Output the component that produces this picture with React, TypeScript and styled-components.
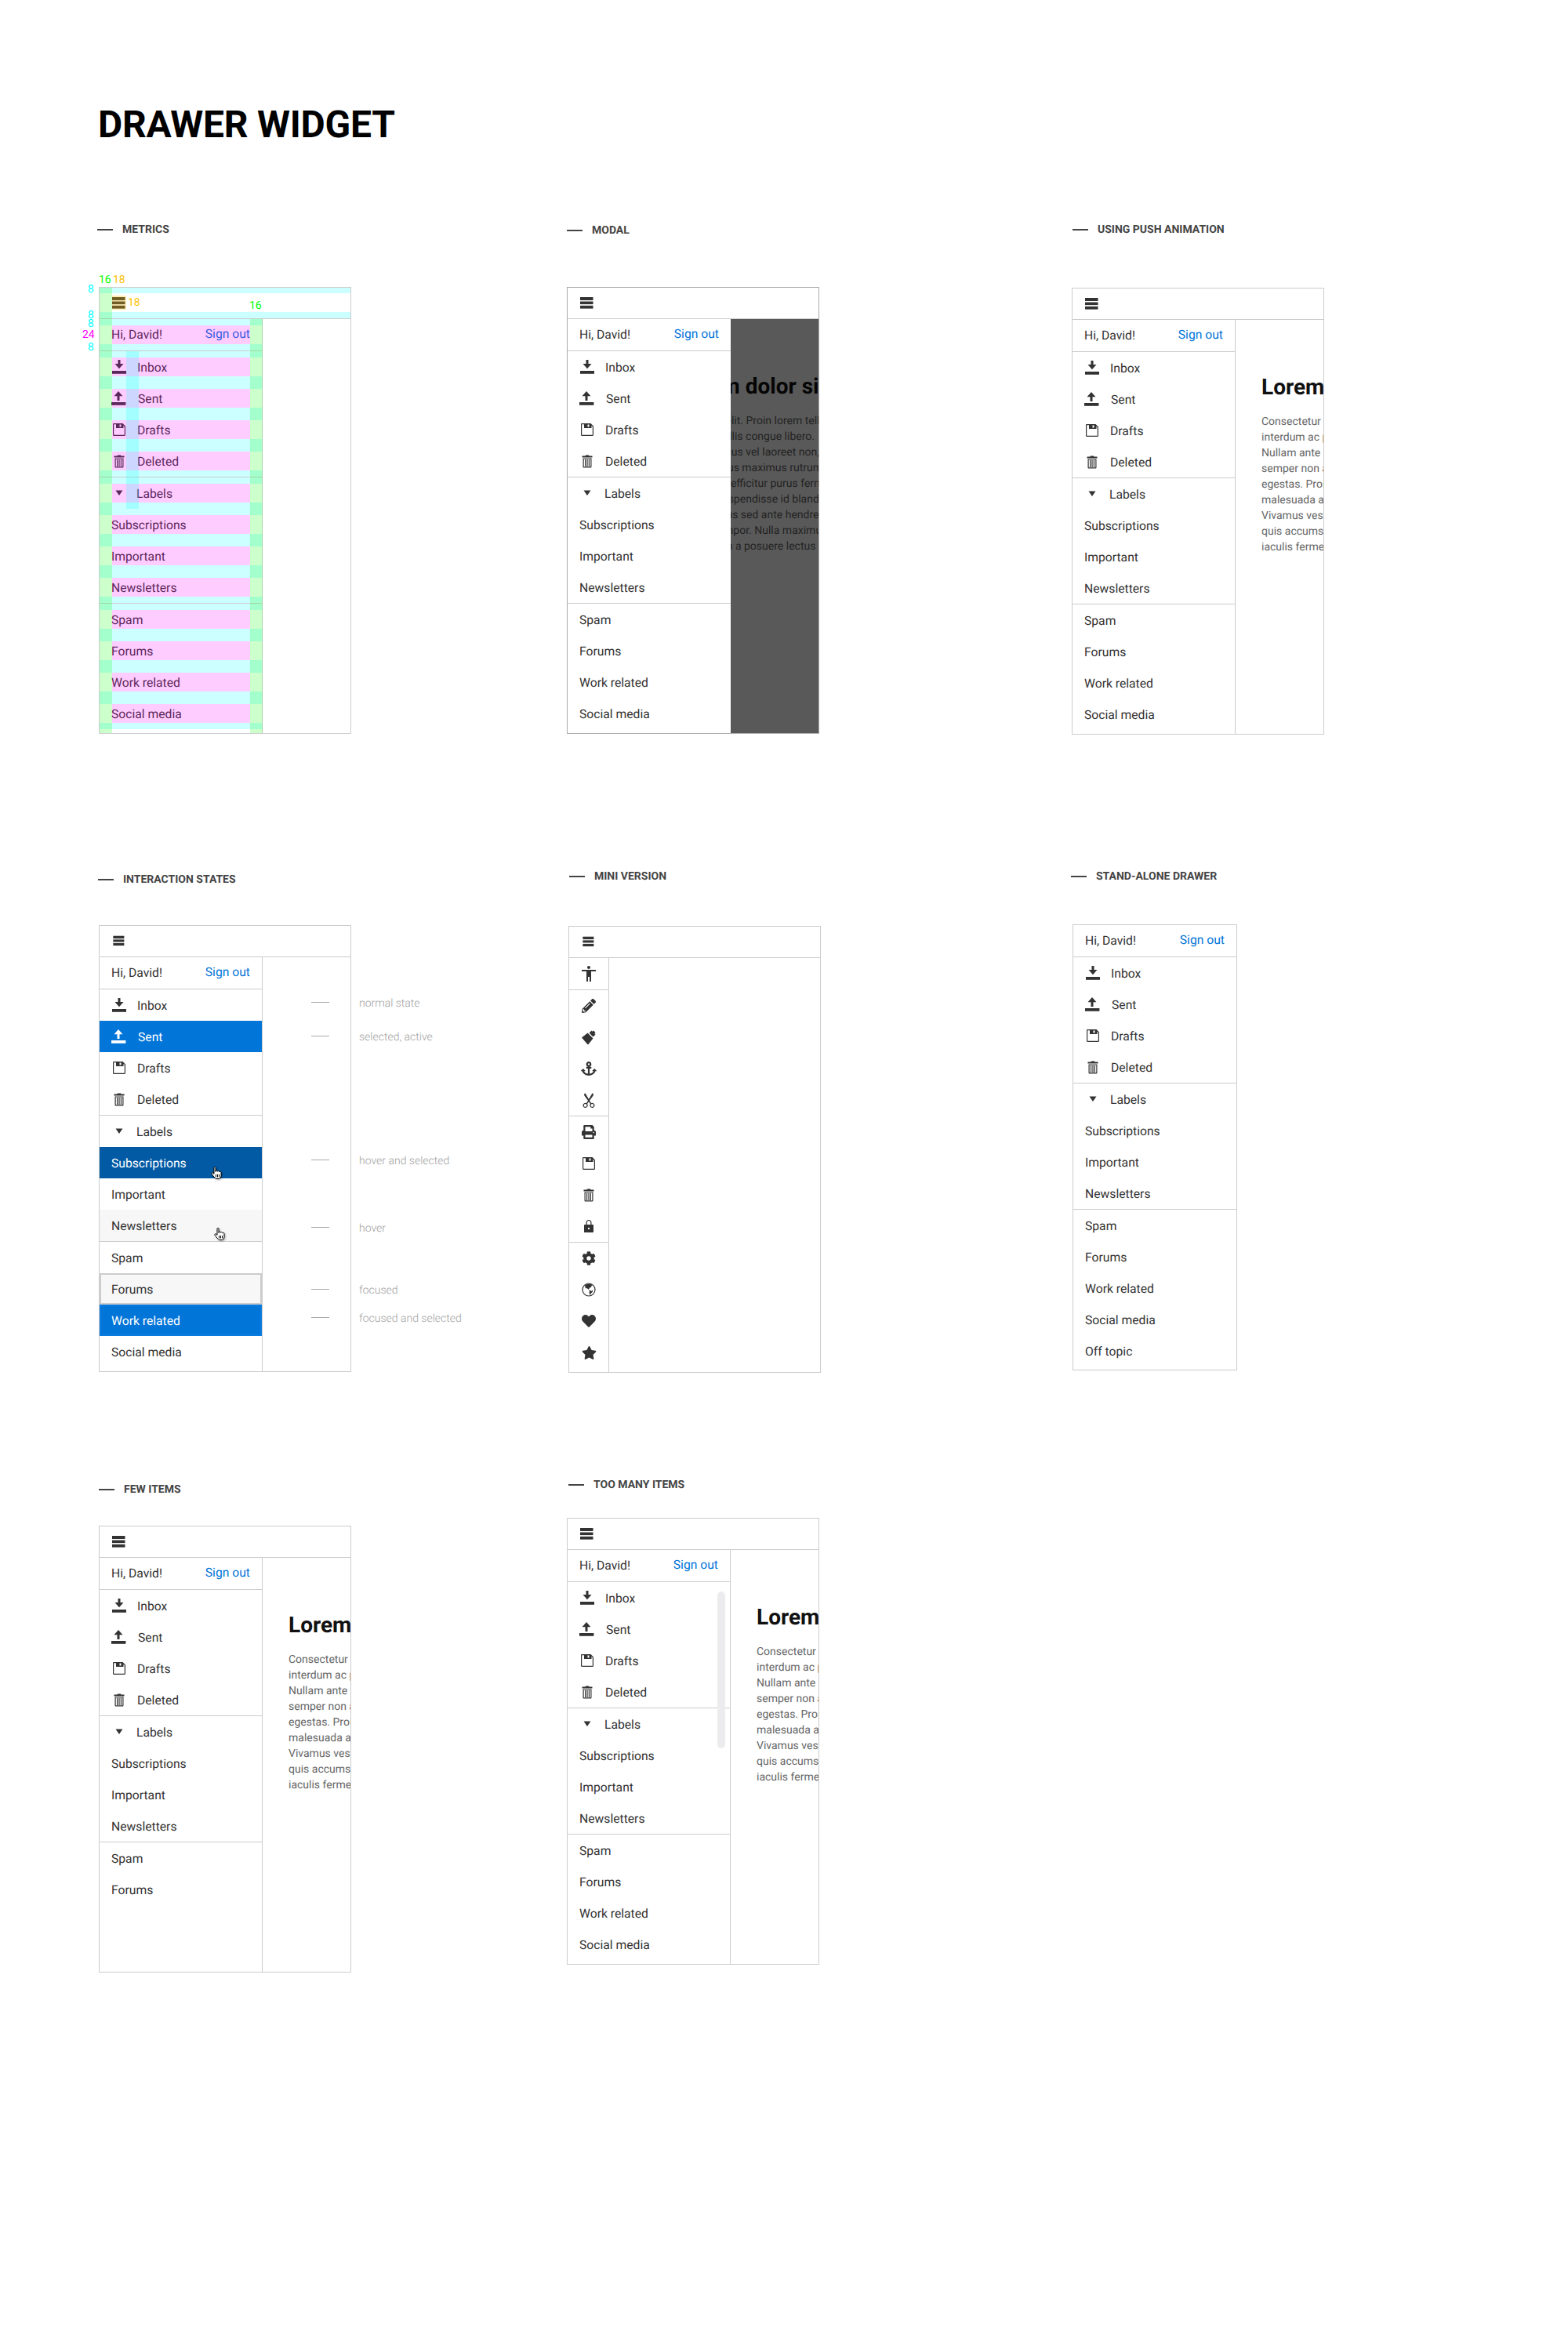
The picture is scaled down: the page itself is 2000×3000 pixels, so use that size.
import React from "react";
import styled, { createGlobalStyle } from "styled-components";
import { FaAnchor, FaCog, FaHeart, FaPencilAlt, FaPrint, FaStar } from "react-icons/fa";
import { MdAccessibility } from "react-icons/md";
import { BsScissors } from "react-icons/bs";

const Global = createGlobalStyle`
  html, body { margin: 0; padding: 0; background: #fff; }
  body {
    font-family: Roboto, "Liberation Sans", sans-serif;
    color: #333;
    text-rendering: geometricPrecision;
  }
  * { box-sizing: border-box; }
`;

const Page = styled.div`
  width: 2000px;
  height: 3000px;
  overflow: hidden;
`;
const Header = styled.header`
  height: 286px;
  padding: 131px 0 0 125px;
`;
const Title = styled.h1`
  margin: 0;
  font-size: 48px;
  line-height: 56px;
  font-weight: 700;
  letter-spacing: -0.25px;
  color: #000;
`;
const Row = styled.section<{ $h: number }>`
  display: grid;
  grid-template-columns: 723px 645px 1fr;
  height: ${(p) => p.$h}px;
  align-items: start;
`;
const Specimen = styled.div``;
const Label = styled.div<{ $x: number; $y: number }>`
  display: flex;
  align-items: center;
  gap: 12px;
  height: 14px;
  margin: ${(p) => p.$y}px 0 0 ${(p) => p.$x}px;
  font-size: 14px;
  line-height: 14px;
  font-weight: 700;
  color: #444;
  white-space: nowrap;
  &::before {
    content: "";
    width: 20px;
    height: 2px;
    background: #444;
  }
`;
const Frame = styled.div<{ $x: number; $y: number; $w?: number; $h?: number; $dark?: boolean }>`
  position: relative;
  display: flex;
  flex-direction: column;
  width: ${(p) => p.$w ?? 322}px;
  height: ${(p) => p.$h ?? 570}px;
  margin: ${(p) => p.$y}px 0 0 ${(p) => p.$x}px;
  border: 1px solid ${(p) => (p.$dark ? "#aaa" : "#ccc")};
  background: #fff;
`;
const Toolbar = styled.div`
  display: flex;
  align-items: center;
  flex: 0 0 40px;
  padding: 0 0 1px 16px;
  border-bottom: 1px solid #ccc;
`;
const Body = styled.div`
  position: relative;
  display: flex;
  flex: 1;
  min-height: 0;
  overflow: hidden;
`;
const DrawerBox = styled.nav<{ $w?: number; $noEdge?: boolean; $over?: boolean }>`
  flex: 0 0 ${(p) => p.$w ?? 208}px;
  width: ${(p) => p.$w ?? 208}px;
  height: 100%;
  background: #fff;
  border-right: ${(p) => (p.$noEdge ? "0" : "1px solid #ccc")};
  ${(p) => (p.$over ? "position: absolute; left: 0; top: 0; z-index: 2;" : "")}
`;
const DrawerHead = styled.div`
  display: flex;
  justify-content: space-between;
  height: 41px;
  padding: 8px 15px;
  border-bottom: 1px solid #ccc;
  font-size: 15.7px;
  line-height: 24px;
`;
const SignOut = styled.span`
  color: #0275d8;
  margin-top: -1px;
`;
const Group = styled.div<{ $last?: boolean }>`
  border-bottom: ${(p) => (p.$last ? "0" : "1px solid #ccc")};
`;
const variants: Record<string, string> = {
  normal: "",
  selected: "background:#0275d8;color:#fff;",
  hoverSelected: "background:#025aa5;color:#fff;",
  hover: "background:#f7f7f7;",
  focused: "background:#f7f7f7;box-shadow:inset 0 0 0 2px #ccc;",
  focusedSelected: "background:#0275d8;color:#fff;box-shadow:inset 0 0 0 2px #0b7be0;",
};
const Item = styled.div<{ $state?: string }>`
  display: flex;
  align-items: center;
  gap: 14px;
  height: 40px;
  padding: 0 15px;
  font-size: 15.7px;
  line-height: 24px;
  color: #333;
  ${(p) => variants[p.$state ?? "normal"]}
  & > svg {
    margin-left: 1px;
  }
`;
const ItemText = styled.span<{ $shift?: number }>`
  padding-top: 2px;
  margin-left: ${(p) => p.$shift ?? 0}px;
`;
const IconSvg = styled.svg<{ $scale?: number }>`
  flex: 0 0 18px;
  width: ${(p) => 18 * (p.$scale ?? 1)}px;
  height: ${(p) => 18 * (p.$scale ?? 1)}px;
  overflow: visible;
  fill: currentColor;
`;
const MiniDrawer = styled.nav`
  flex: 0 0 51px;
  height: 100%;
  border-right: 1px solid #ccc;
`;
const MiniHead = styled.div`
  display: flex;
  align-items: center;
  justify-content: center;
  height: 41px;
  border-bottom: 1px solid #ccc;
  color: #333;
`;
const MiniGroup = styled.div<{ $last?: boolean }>`
  border-bottom: ${(p) => (p.$last ? "0" : "1px solid #ccc")};
`;
const MiniItem = styled.div`
  display: flex;
  align-items: center;
  justify-content: center;
  height: 40px;
  color: #333;
`;
const Content = styled.article<{ $left: number }>`
  flex: 1;
  min-width: 0;
  padding: 69px 0 0 ${(p) => p.$left}px;
  overflow: hidden;
  white-space: nowrap;
`;
const Heading = styled.h2`
  margin: 0 0 17px;
  font-size: 28px;
  line-height: 34px;
  font-weight: 700;
  color: #111;
`;
const Para = styled.p`
  margin: 0;
  font-size: 14px;
  line-height: 20px;
  color: #666;
`;
const Scrim = styled.div`
  position: absolute;
  inset: 0;
  z-index: 1;
  background: rgba(0, 0, 0, 0.65);
`;
const Scrollbar = styled.div`
  position: absolute;
  left: 191px;
  top: 53px;
  width: 10px;
  height: 200px;
  border-radius: 5px;
  background: #ececee;
`;
const Annotation = styled.div<{ $y: number }>`
  position: absolute;
  left: 270px;
  top: ${(p) => p.$y}px;
  display: flex;
  align-items: center;
  gap: 38px;
  height: 20px;
  font-size: 14px;
  font-weight: 300;
  line-height: 20px;
  color: #a0a0a0;
  white-space: nowrap;
  &::before {
    content: "";
    width: 23px;
    height: 1px;
    margin-top: -3px;
    background: #aaa;
  }
`;
const Cursor = styled.svg<{ $x: number; $y: number }>`
  position: absolute;
  left: ${(p) => p.$x}px;
  top: ${(p) => p.$y}px;
  width: 15px;
  height: 17px;
  overflow: visible;
`;

/* Metrics overlay */
const Overlay = styled.div`
  position: absolute;
  inset: 0;
  z-index: 3;
  pointer-events: none;
  display: flex;
  flex-direction: column;
`;
const Band = styled.div<{ $full?: boolean; $h?: number; $top?: number; $blank?: boolean }>`
  flex: 0 0 ${(p) => p.$h ?? 40}px;
  width: ${(p) => (p.$full ? "320px" : "207px")};
  padding: ${(p) => p.$top ?? 8}px ${(p) => (p.$blank ? 0 : 15)}px 8px ${(p) => (p.$blank ? 0 : 16)}px;
  background: linear-gradient(
    to bottom,
    rgba(0, 255, 255, 0.2) ${(p) => p.$top ?? 8}px,
    transparent ${(p) => p.$top ?? 8}px,
    transparent calc(100% - 8px),
    rgba(0, 255, 255, 0.2) calc(100% - 8px)
  );
  display: flex;
`;
const BandCore = styled.div<{ $blank?: boolean }>`
  flex: 1;
  background: ${(p) => (p.$blank ? "transparent" : "rgba(255, 0, 255, 0.2)")};
`;
const BandGap = styled.div`
  flex: 0 0 1px;
`;
const Strip = styled.div<{ $x: number; $w: number; $top: number; $h?: number; $c: string }>`
  position: absolute;
  left: ${(p) => p.$x}px;
  width: ${(p) => p.$w}px;
  top: ${(p) => p.$top}px;
  ${(p) => (p.$h ? `height:${p.$h}px;` : "bottom:0;")}
  background: ${(p) => p.$c};
`;
const Note = styled.span<{ $x: number; $y: number; $c: string }>`
  position: absolute;
  left: ${(p) => p.$x}px;
  top: ${(p) => p.$y}px;
  font-size: 14px;
  line-height: 16px;
  color: ${(p) => p.$c};
`;

/* Icons */
const Svg = ({ children, scale }: { children: React.ReactNode; scale?: number }) => (
  <IconSvg viewBox="0 0 18 18" $scale={scale}>
    {children}
  </IconSvg>
);
const MenuIcon = ({ small }: { small?: boolean }) => (
  <Svg scale={small ? 0.85 : 1}>
    <rect x="0" y="2" width="16.5" height="4" />
    <rect x="0" y="7.5" width="16.5" height="3.6" />
    <rect x="0" y="12.8" width="16.5" height="3.8" />
  </Svg>
);
const DownloadIcon = () => (
  <Svg>
    <path d="M7.5 0h3v5h4L9 11.2 3.500 5h4z" />
    <rect x="0" y="14" width="18" height="3.8" />
  </Svg>
);
const UploadIcon = () => (
  <Svg>
    <path d="M8 0l5.500 6.200h-4V12h-3V6.200h-4z" />
    <rect x="-1" y="14" width="18.4" height="3.8" />
  </Svg>
);
const SaveIcon = () => (
  <Svg>
    <path
      fillRule="evenodd"
      d="M2.200 1h11.300L17 4.500v11.300c0 .7-.5 1.200-1.200 1.200H2.200C1.500 17 1 16.500 1 15.800V2.200C1 1.500 1.500 1 2.200 1zM2.200 2.200v13.600h13.600V5l-1.300-1.300V7H5V2.200zM9.500 2.500v3h2v-3z"
    />
  </Svg>
);
const TrashIcon = () => (
  <Svg>
    <path
      fillRule="evenodd"
      d="M6.500 2.500L7 1.500h4l.5 1h4v2h-13v-2zM3.500 5.500h11v10.700c0 .7-.5 1.300-1.200 1.300H4.700c-.7 0-1.200-.6-1.200-1.300zM4.700 6.500v9.500c0 .2.100.3.300.3h8c.2 0 .3-.1.300-.3V6.500z"
    />
    <rect x="6" y="7" width="1.200" height="9" />
    <rect x="8.400" y="7" width="1.200" height="9" />
    <rect x="10.800" y="7" width="1.200" height="9" />
  </Svg>
);
const CaretIcon = () => (
  <Svg>
    <path d="M4.500 5.500h9L9 12z" />
  </Svg>
);
const BrushIcon = () => (
  <Svg>
    <path d="M0 9.500L7.500 3.500l7 7L8.500 18c-.5.3-1 .2-1.400-.2zM9.500 3.500l3-3 1.200 1.200 1.300-1.300 2.600 2.600-1.300 1.300 1.200 1.200-3 3z" />
  </Svg>
);
const GlobeIcon = () => (
  <Svg>
    <circle cx="9" cy="9" r="8" fill="none" stroke="currentColor" strokeWidth="1.200" />
    <path d="M4 3.500C6.500 1 11 .8 14 3l-1.500 1-.5 2-2 .5-1 2.500L6.500 7 5 7.500zM9 9.500l3.500 1.200 1.500-1v1.800L11.500 14l-.5 2.500-1.500-3.500.5-1.500z" />
  </Svg>
);
const LockIcon = () => (
  <Svg>
    <path
      fillRule="evenodd"
      d="M5.500 7V4.500C5.500 2.300 7 1 9 1s3.500 1.300 3.500 3.500V7H14c.6 0 1 .4 1 1v8c0 .6-.4 1-1 1H4c-.6 0-1-.4-1-1V8c0-.6.4-1 1-1zM6.700 7h4.600V4.500C11.300 3 10.300 2.100 9 2.100S6.700 3 6.700 4.500zM8 11v2h2v-2z"
    />
  </Svg>
);
const HandCursor = ({ x, y }: { x: number; y: number }) => (
  <Cursor $x={x} $y={y} viewBox="0 0 15 17">
    <path
      d="M4 1.200c0-1.200 2-1.200 2 0v5.300l.5-1.200c1-.6 1.800 0 1.800.8l.7-.4c1-.4 1.700.2 1.700 1l.7-.3c.9-.2 1.600.4 1.600 1.300v3.800c0 1.700-1 3.500-2.500 4H6.500C5 14.500 3 12 1 9.300c-.7-1.100.6-2 1.500-1.200L4 9.300z"
      fill="#fff"
      stroke="#000"
      strokeWidth="1"
      strokeLinejoin="round"
      style={{ filter: "drop-shadow(1px 1px 1px rgba(0,0,0,.35))" }}
    />
    <path d="M6.500 10v3.500M8.500 10v3.500M10.500 10v3.500" stroke="#000" strokeWidth="1" />
  </Cursor>
);

type Entry = { t: string; i?: React.ReactNode; s?: string; shift?: number };
const base: Entry[][] = [
  [
    { t: "Inbox", i: <DownloadIcon /> },
    { t: "Sent", i: <UploadIcon />, shift: 1 },
    { t: "Drafts", i: <SaveIcon /> },
    { t: "Deleted", i: <TrashIcon /> },
  ],
  [
    { t: "Labels", i: <CaretIcon />, shift: -1 },
    { t: "Subscriptions" },
    { t: "Important" },
    { t: "Newsletters" },
  ],
  [{ t: "Spam" }, { t: "Forums" }, { t: "Work related" }, { t: "Social media" }],
];

const withStates: Entry[][] = [
  [base[0][0], { ...base[0][1], s: "selected" }, base[0][2], base[0][3]],
  [
    base[1][0],
    { ...base[1][1], s: "hoverSelected" },
    base[1][2],
    { ...base[1][3], s: "hover" },
  ],
  [
    base[2][0],
    { ...base[2][1], s: "focused" },
    { ...base[2][2], s: "focusedSelected" },
    base[2][3],
  ],
];
const few: Entry[][] = [base[0], base[1], [{ t: "Spam" }, { t: "Forums" }]];
const standalone: Entry[][] = [base[0], base[1], [...base[2], { t: "Off topic" }]];

const Drawer = ({
  groups = base,
  noEdge,
  over,
}: {
  groups?: Entry[][];
  noEdge?: boolean;
  over?: boolean;
}) => (
  <DrawerBox $noEdge={noEdge} $over={over}>
    <DrawerHead>
      <span>Hi, David!</span>
      <SignOut>Sign out</SignOut>
    </DrawerHead>
    {groups.map((g, n) => (
      <Group key={n} $last={n === groups.length - 1}>
        {g.map((e) => (
          <Item key={e.t} $state={e.s}>
            {e.i}
            <ItemText $shift={e.shift}>{e.t}</ItemText>
          </Item>
        ))}
      </Group>
    ))}
  </DrawerBox>
);

const lorem = [
  "Consectetur adipiscing elit. Proin lorem tellus,",
  "interdum ac purus in mollis congue libero.",
  "Nullam ante ligula, rhoncus vel laoreet non,",
  "semper non augue, cursus maximus rutrum",
  "egestas. Proin sed enim efficitur purus fermentum",
  "malesuada a magna. Suspendisse id blandit",
  "Vivamus vestibulum lacus sed ante hendrerit",
  "quis accumsan nunc tempor. Nulla maximus",
  "iaculis fermentum. Etiam a posuere lectus",
];
const Lorem = ({ left }: { left: number }) => (
  <Content $left={left}>
    <Heading>Lorem ipsum dolor sit amet</Heading>
    <Para>
      {lorem.map((l) => (
        <React.Fragment key={l}>
          {l}
          <br />
        </React.Fragment>
      ))}
    </Para>
  </Content>
);

const miniGroups: React.ReactNode[][] = [
  [<MdAccessibility size={24} />],
  [
    <FaPencilAlt size={18} />,
    <BrushIcon />,
    <FaAnchor size={20} />,
    <BsScissors size={20} />,
  ],
  [<FaPrint size={18} />, <SaveIcon />, <TrashIcon />, <LockIcon />],
  [<FaCog size={18} />, <GlobeIcon />, <FaHeart size={18} />, <FaStar size={19} />],
];

const TopBar = ({ small }: { small?: boolean }) => (
  <Toolbar>
    <MenuIcon small={small} />
  </Toolbar>
);

const bandRows = [
  [0],
  [1, 2, 3, 4],
  [5, 6, 7, 8],
  [9, 10, 11, 12],
];

const MetricsLayer = () => (
  <Overlay>
    <Band $full $h={39} $top={7} $blank>
      <BandCore $blank />
    </Band>
    <BandGap />
    {bandRows.map((g, n) => (
      <React.Fragment key={n}>
        {g.map((k) => (
          <Band key={k}>
            <BandCore />
          </Band>
        ))}
        <BandGap />
      </React.Fragment>
    ))}
    <Strip $x={0} $w={16} $top={0} $c="rgba(0,255,0,0.2)" />
    <Strip $x={192} $w={16} $top={40} $c="rgba(0,255,0,0.2)" />
    <Strip $x={34} $w={16} $top={81} $h={201} $c="rgba(0,255,255,0.2)" />
    <Strip $x={16} $w={18} $top={10} $h={18} $c="rgba(255,193,7,0.3)" />
    <Note $x={-1} $y={-18} $c="#00ff00">16</Note>
    <Note $x={17} $y={-18} $c="#ffc107">18</Note>
    <Note $x={-15} $y={-6} $c="#00ffff">8</Note>
    <Note $x={36} $y={11} $c="#ffc107">18</Note>
    <Note $x={191} $y={15} $c="#00ff00">16</Note>
    <Note $x={-15} $y={27} $c="#00ffff">8</Note>
    <Note $x={-15} $y={38} $c="#00ffff">8</Note>
    <Note $x={-22} $y={52} $c="#ff00ff">24</Note>
    <Note $x={-15} $y={68} $c="#00ffff">8</Note>
  </Overlay>
);

export default function App() {
  return (
    <Page>
      <Global />
      <Header>
        <Title>DRAWER WIDGET</Title>
      </Header>

      <Row $h={825}>
        <Specimen>
          <Label $x={124} $y={0}>METRICS</Label>
          <Frame $x={126} $y={66}>
            <TopBar />
            <Body>
              <Drawer />
            </Body>
            <MetricsLayer />
          </Frame>
        </Specimen>
        <Specimen>
          <Label $x={0} $y={1}>MODAL</Label>
          <Frame $x={0} $y={65} $dark>
            <TopBar />
            <Body>
              <Lorem left={55} />
              <Scrim />
              <Drawer noEdge over />
            </Body>
          </Frame>
        </Specimen>
        <Specimen>
          <Label $x={0} $y={0}>USING PUSH ANIMATION</Label>
          <Frame $x={-1} $y={67}>
            <TopBar />
            <Body>
              <Drawer />
              <Lorem left={33} />
            </Body>
          </Frame>
        </Specimen>
      </Row>

      <Row $h={776}>
        <Specimen>
          <Label $x={125} $y={4}>INTERACTION STATES</Label>
          <Frame $x={126} $y={51}>
            <TopBar small />
            <Body>
              <Drawer groups={withStates} />
            </Body>
            <Annotation $y={89}>normal state</Annotation>
            <Annotation $y={132}>selected, active</Annotation>
            <Annotation $y={290}>hover and selected</Annotation>
            <Annotation $y={376}>hover</Annotation>
            <Annotation $y={455}>focused</Annotation>
            <Annotation $y={491}>focused and selected</Annotation>
            <HandCursor x={142} y={307} />
            <HandCursor x={146} y={385} />
          </Frame>
        </Specimen>
        <Specimen>
          <Label $x={3} $y={0}>MINI VERSION</Label>
          <Frame $x={2} $y={56}>
            <Toolbar>
              <MenuIcon small />
            </Toolbar>
            <Body>
              <MiniDrawer>
                {miniGroups.map((g, n) =>
                  n === 0 ? (
                    <MiniHead key={n}>{g[0]}</MiniHead>
                  ) : (
                    <MiniGroup key={n} $last={n === miniGroups.length - 1}>
                      {g.map((icon, k) => (
                        <MiniItem key={k}>{icon}</MiniItem>
                      ))}
                    </MiniGroup>
                  )
                )}
              </MiniDrawer>
            </Body>
          </Frame>
        </Specimen>
        <Specimen>
          <Label $x={-2} $y={0}>STAND-ALONE DRAWER</Label>
          <Frame $x={0} $y={54} $w={210} $h={569}>
            <Drawer groups={standalone} noEdge />
          </Frame>
        </Specimen>
      </Row>

      <Row $h={800}>
        <Specimen>
          <Label $x={126} $y={6}>FEW ITEMS</Label>
          <Frame $x={126} $y={39}>
            <TopBar />
            <Body>
              <Drawer groups={few} />
              <Lorem left={33} />
            </Body>
          </Frame>
        </Specimen>
        <Specimen>
          <Label $x={2} $y={0}>TOO MANY ITEMS</Label>
          <Frame $x={0} $y={35}>
            <TopBar />
            <Body>
              <Drawer />
              <Lorem left={33} />
              <Scrollbar />
            </Body>
          </Frame>
        </Specimen>
        <Specimen />
      </Row>
    </Page>
  );
}
